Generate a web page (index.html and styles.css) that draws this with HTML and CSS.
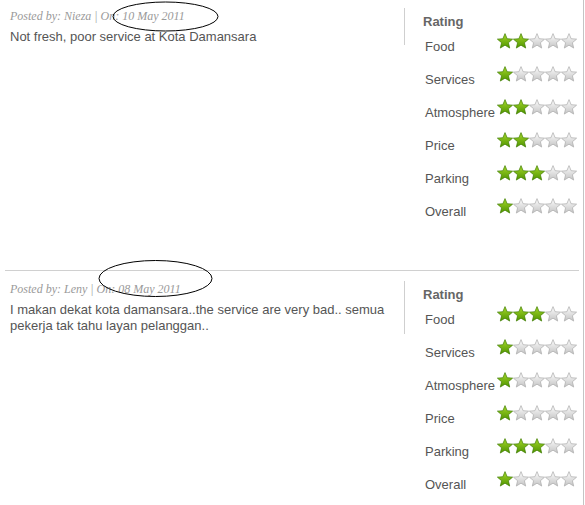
FILE: index.html
```html
<!DOCTYPE html>
<html lang="en">
<head>
  <meta charset="UTF-8">
  <title>Reviews</title>
  <link rel="stylesheet" href="styles.css">
</head>
<body>

  <!-- star shapes reused by every rating -->
  <svg class="defs" width="0" height="0">
    <defs>
      <linearGradient id="greenFill" x1="0" y1="0" x2="0" y2="1">
        <stop offset="0" stop-color="#a6d82a"/>
        <stop offset="1" stop-color="#4f9400"/>
      </linearGradient>
      <linearGradient id="greyFill" x1="0" y1="0" x2="0" y2="1">
        <stop offset="0" stop-color="#fdfdfd"/>
        <stop offset="1" stop-color="#c4c4c4"/>
      </linearGradient>
      <path id="star" d="M8 0.6 L10.12 5.69 L15.61 6.13 L11.42 9.71 L12.7 15.07 L8 12.2 L3.3 15.07 L4.58 9.71 L0.39 6.13 L5.88 5.69 Z"/>
    </defs>
  </svg>

  <div class="reviews">

    <div class="review">
      <svg class="mark" width="300" height="40">
        <ellipse cx="165.5" cy="16.5" rx="52.5" ry="14.5"/>
      </svg>
      <div class="review-body">
        <p class="posted">Posted by: Nieza | On: 10 May 2011</p>
        <p class="comment">Not fresh, poor service at Kota Damansara</p>
      </div>
      <div class="rating" data-scores="2,1,2,2,3,1">
        <h4>Rating</h4>
      </div>
    </div>

    <div class="divider"></div>

    <div class="review">
      <svg class="mark" width="300" height="40">
        <ellipse cx="155.5" cy="5.5" rx="56.5" ry="18"/>
      </svg>
      <div class="review-body">
        <p class="posted">Posted by: Leny | On: 08 May 2011</p>
        <p class="comment">I makan dekat kota damansara..the service are very bad.. semua pekerja tak tahu layan pelanggan..</p>
      </div>
      <div class="rating" data-scores="3,1,1,1,3,1">
        <h4>Rating</h4>
      </div>
    </div>

  </div>

  <script>
    // Rating categories, in display order
    const categories = ['Food', 'Services', 'Atmosphere', 'Price', 'Parking', 'Overall'];

    function starSvg(on) {
      const cls = on ? 'star on' : 'star';
      return `<svg class="${cls}" width="16" height="16" viewBox="0 0 16 16"><use href="#star"/></svg>`;
    }

    document.querySelectorAll('.rating').forEach(function(box) {
      const scores = box.dataset.scores.split(',').map(Number);
      categories.forEach(function(name, i) {
        let stars = '';
        for (let s = 1; s <= 5; s++) {
          stars += starSvg(s <= scores[i]);
        }
        const row = document.createElement('div');
        row.className = 'row';
        row.innerHTML = `<span class="label">${name}</span><span class="stars">${stars}</span>`;
        box.appendChild(row);
      });
    });
  </script>

</body>
</html>
```

FILE: styles.css
```css
body {
  margin: 0;
  background-color: white;
  font-family: "Liberation Sans", Arial, sans-serif;
  color: #555;
}

.defs {
  position: absolute;
}

.reviews {
  width: 583px;
  height: 100vh;
  overflow: hidden;
  border-right: 1px solid #c4c4c4;
}

.review {
  position: relative;
  display: flex;
  align-items: flex-start;
  height: 262px;
  padding: 8px 0 0 10px;
}

.review:last-child {
  height: auto;
}

.divider {
  height: 1px;
  margin: 0 4px 2px 5px;
  background-color: #d0d0d0;
}

.mark {
  position: absolute;
  left: 0;
  top: 0;
  overflow: visible;
  pointer-events: none;
}

.mark ellipse {
  fill: none;
  stroke: #000;
  stroke-width: 1;
}

.review-body {
  width: 394px;
  border-right: 1px solid #cfcfcf;
}

.posted {
  margin: 0 0 5px;
  font-family: "Liberation Serif", "Times New Roman", serif;
  font-style: italic;
  font-size: 12px;
  line-height: 16px;
  color: #9a9a9a;
}

.comment {
  margin: 0;
  font-size: 13px;
  line-height: 16px;
  color: #555;
}

.rating {
  padding-left: 18px;
}

.rating h4 {
  margin: 6px 0 2px;
  font-size: 13px;
  line-height: 16px;
  font-weight: bold;
  color: #666;
}

.row {
  display: flex;
  align-items: flex-start;
  height: 33px;
}

.label {
  width: 72px;
  padding: 7px 0 0 2px;
  font-size: 13px;
  line-height: 16px;
  color: #555;
}

.stars {
  display: flex;
  margin-top: 1px;
}

.star {
  display: block;
  fill: url(#greyFill);
  stroke: #aaa;
  stroke-width: 0.7;
}

.star.on {
  fill: url(#greenFill);
  stroke: #3f7d00;
}
```
